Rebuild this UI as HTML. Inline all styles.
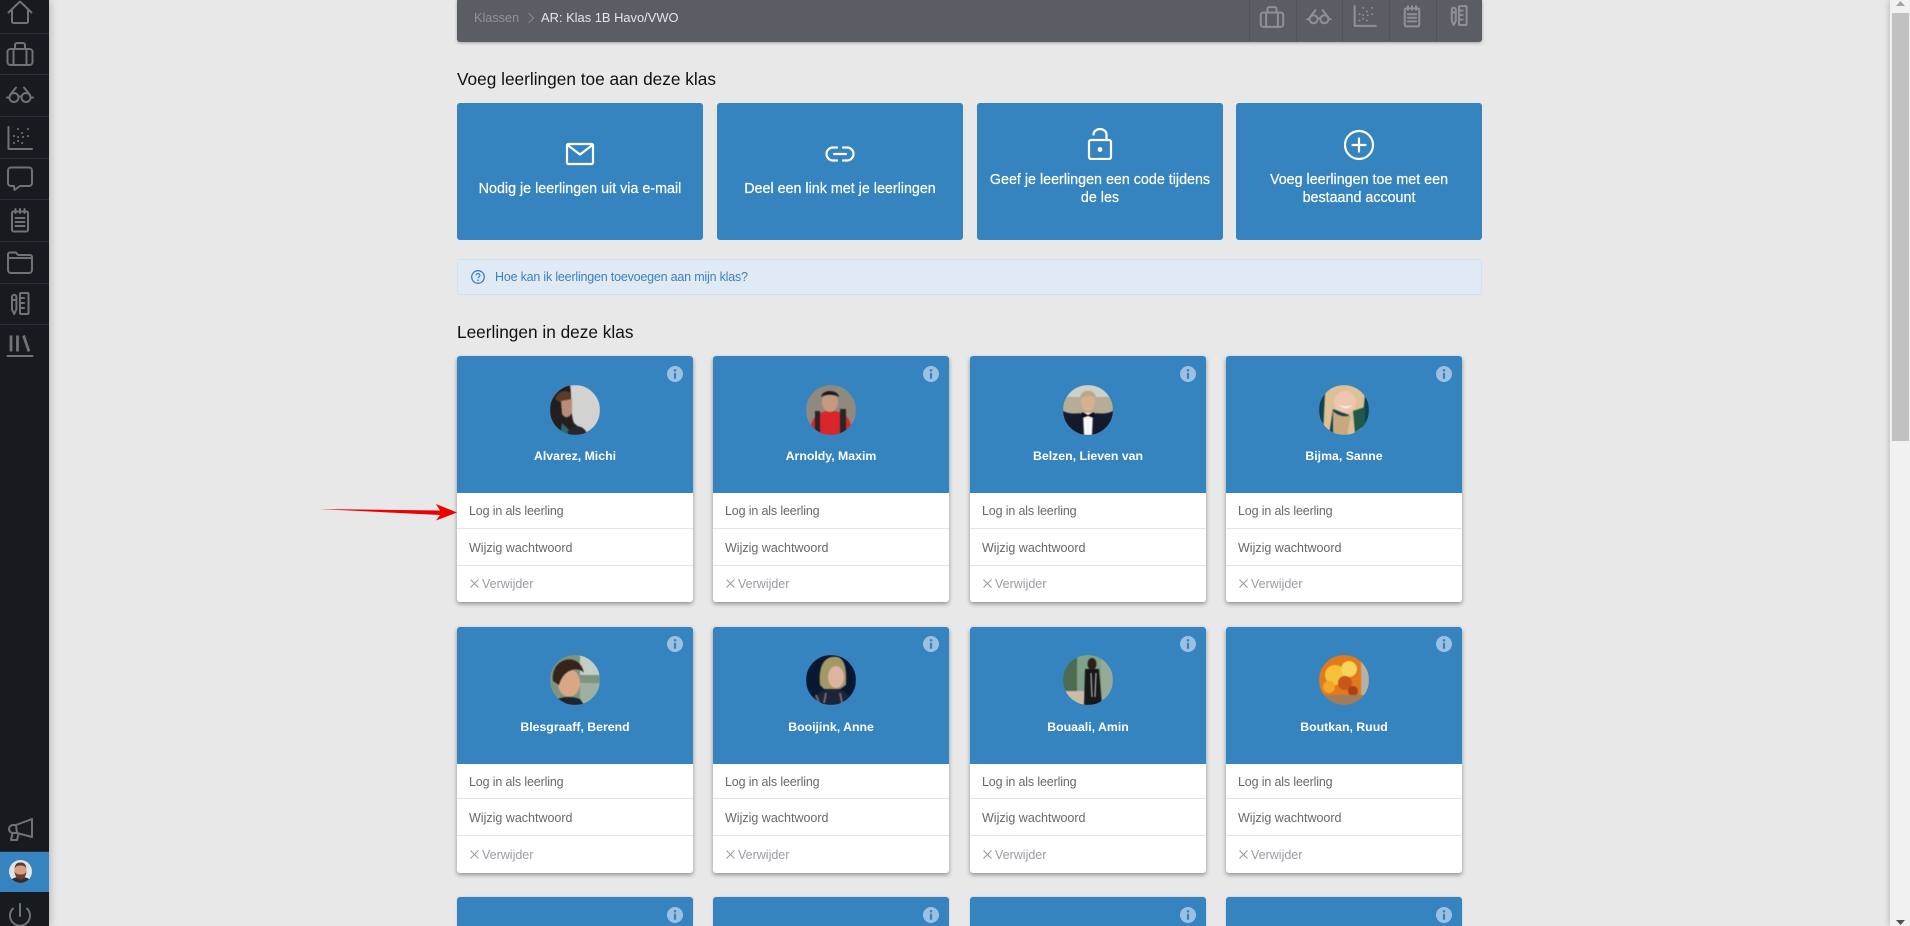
<!DOCTYPE html>
<html lang="nl">
<head>
<meta charset="utf-8">
<title>Klas</title>
<style>
html,body{margin:0;padding:0;width:1910px;height:926px;overflow:hidden}
#page{position:relative;width:1910px;height:926px;overflow:hidden;background:#e8e8e8;font-family:"Liberation Sans",sans-serif}
.a{position:absolute}
#side{left:0;top:0;width:49px;height:926px;background:#171a1f;box-shadow:0 0 9px rgba(0,0,0,.28)}
.sep{position:absolute;left:0;width:49px;height:1px;background:#2b2f37}
.ic{position:absolute;fill:none;stroke:#707276;stroke-width:2;stroke-linecap:round;stroke-linejoin:round}
.tic{position:absolute;fill:none;stroke:#8f9195;stroke-width:2.200;stroke-linecap:round;stroke-linejoin:round}
#bar{left:457px;top:0;width:1025px;height:42px;background:#5a5d64;border-radius:0 0 3px 3px;box-shadow:0 1px 3px rgba(0,0,0,.3)}
.bs{position:absolute;top:0;width:1px;height:42px;background:#50535a}
h2{position:absolute;margin:0;font-weight:400;font-size:17.250px;line-height:22px;color:#111;white-space:nowrap}
.b{position:absolute;top:103px;width:246px;height:137px;background:#3583bf;border-radius:3px;color:#fff}
.b div{position:absolute;left:10px;right:10px;text-align:center;font-size:14.300px;line-height:18px;-webkit-text-stroke:.2px #fff}
.b svg{position:absolute;fill:none;stroke:#fff;stroke-width:2.200;stroke-linecap:round;stroke-linejoin:round}
.c{position:absolute;width:236px;height:246px;background:#fff;border-radius:3px;box-shadow:0 2px 4px rgba(0,0,0,.38);overflow:hidden}
.t{height:29px;border-radius:3px 3px 0 0;box-shadow:0 0 2px rgba(0,0,0,.15)}
.h{position:absolute;left:0;top:0;width:236px;height:137px;background:#3583bf}
.i{position:absolute;left:210px;top:10px}
.v{position:absolute;left:93px;top:29px;width:50px;height:50px;border-radius:50%;overflow:hidden}
.v svg{display:block;filter:blur(.5px)}
.n{position:absolute;left:0;width:236px;top:90px;text-align:center;color:#fff;font-size:12.300px;font-weight:700;line-height:20px;white-space:nowrap}
.r{position:absolute;left:12px;font-size:12.500px;line-height:20px;color:#66686e;white-space:nowrap}
.g{letter-spacing:-.15px}
.l{position:absolute;left:0;width:236px;height:1px;background:#e4e4e6}
.d{color:#9a9ca3;left:25px}
.x{position:absolute;left:13px;stroke:#9a9ca3;stroke-width:1.100;fill:none}
.r2 .v{top:28px}
.r2 .i{top:9px}
</style>
</head>
<body>
<div id="page">
<svg width="0" height="0" style="position:absolute">
<symbol id="brief" viewBox="0 0 40 40"><rect x="7.500" y="15" width="25" height="16" rx="3"/><path d="M15 15V11a2 2 0 0 1 2-2h6a2 2 0 0 1 2 2v4M13.500 15v16M26.500 15v16"/></symbol>
<symbol id="glass" viewBox="0 0 40 40"><circle cx="14" cy="22.500" r="4.500"/><circle cx="26" cy="22.500" r="4.500"/><path d="M18.500 22c1-.8 2-.8 3 0M7 22.500h2.500M30.500 22.500H33M10 20l6-7.500M30 20l-6-7.500"/></symbol>
<symbol id="chart" viewBox="0 0 40 40"><path d="M8.500 9v22H32"/><path stroke-width="2" stroke-dasharray=".1 99" d="M18 11h.1M28 11h.1M22 15h.1M14 18h.1M18 19h.1M23 19h.1M28 18h.1M14 25h.1M22 25h.1M18 23h.1"/></symbol>
<symbol id="chat" viewBox="0 0 40 40"><path d="M11 8.500h18a3 3 0 0 1 3 3V24a3 3 0 0 1-3 3H20l-5.500 4-.5-4h-3a3 3 0 0 1-3-3V11.500a3 3 0 0 1 3-3z"/></symbol>
<symbol id="note" viewBox="0 0 40 40"><rect x="12" y="11.500" width="16" height="20" rx="1.500"/><path d="M15.500 9v4M20 9v4M24.500 9v4M15.500 18h9M15.500 22h9M15.500 26h9"/></symbol>
<symbol id="folder" viewBox="0 0 40 40"><path d="M8 15v-3.500a2 2 0 0 1 2-2h6l2 2.500h12a2 2 0 0 1 2 2V27a3 3 0 0 1-3 3H11a3 3 0 0 1-3-3V15h24"/></symbol>
<symbol id="tools" viewBox="0 0 40 40"><path d="M12 13a2.200 2.200 0 0 1 4.400 0v12.500L14.200 30 12 25.500zM12 16h4.400"/><rect x="20" y="9" width="8.500" height="21" rx="1"/><path d="M20 14h4M20 19h4M20 24h4" /></symbol>
<symbol id="lib" viewBox="0 0 40 40"><path stroke-width="2.800" stroke-linecap="butt" d="M11 9.500v16M17.500 9.500v16M23.500 9.500l5.500 16"/><path d="M7.500 30h25"/></symbol>
</svg>

<!-- Sidebar -->
<div id="side" class="a">
<svg class="ic" style="left:0;top:0" width="40" height="26" viewBox="0 0 40 26"><path d="M8.500 12.500L20 1.500l11.500 11M12 10.500V21.500a1.500 1.500 0 0 0 1.500 1.500h13a1.500 1.500 0 0 0 1.500-1.500V10.500"/></svg>
<div class="sep" style="top:33px"></div>
<svg class="ic" style="left:0;top:34px" width="40" height="40"><use href="#brief"/></svg>
<div class="sep" style="top:74px"></div>
<svg class="ic" style="left:0;top:75px" width="40" height="40"><use href="#glass"/></svg>
<div class="sep" style="top:116px"></div>
<svg class="ic" style="left:0;top:118px" width="40" height="40"><use href="#chart"/></svg>
<div class="sep" style="top:158px"></div>
<svg class="ic" style="left:0;top:159px" width="40" height="40"><use href="#chat"/></svg>
<div class="sep" style="top:199px"></div>
<svg class="ic" style="left:0;top:200px" width="40" height="40"><use href="#note"/></svg>
<div class="sep" style="top:241px"></div>
<svg class="ic" style="left:0;top:243px" width="40" height="40"><use href="#folder"/></svg>
<div class="sep" style="top:283px"></div>
<svg class="ic" style="left:0;top:284px" width="40" height="40"><use href="#tools"/></svg>
<div class="sep" style="top:324px"></div>
<svg class="ic" style="left:0;top:326px" width="40" height="40"><use href="#lib"/></svg>
<svg class="ic" style="left:0;top:815px" width="40" height="30" viewBox="0 0 40 30"><path d="M16 10L32 4v18l-15-4zM16 10h-3a4 4 0 0 0 0 8h4M12.500 18L11 25h6l1.500-6"/></svg>
<div class="a" style="left:0;top:851px;width:49px;height:1px;background:#2b2f37"></div>
<div class="a" style="left:0;top:852px;width:49px;height:40px;background:#3583bf"></div>
<div class="a" style="left:9px;top:860px;width:23px;height:23px;border-radius:50%;overflow:hidden">
<svg width="23" height="23" viewBox="0 0 23 23" style="display:block"><rect width="23" height="23" fill="#dfe3e6"/><path d="M1 23c1-5 5-6 10.500-6S21 18 22 23z" fill="#2f2e33"/><ellipse cx="11.500" cy="10.500" rx="6" ry="7.500" fill="#d59f85"/><path d="M5.500 9C6 3 9 2.500 11.500 2.500S17 3 17.500 9c-1-3-3-3.500-6-3.500S6.500 6 5.500 9z" fill="#5a3c2c"/><path d="M5.500 11c.5 6 3 8.500 6 8.500s5.500-2.500 6-8.500c-1 3-3 3.500-6 3.500s-5-.5-6-3.500z" fill="#6b3f2a"/></svg>
</div>
<svg class="ic" style="left:0;top:900px" width="40" height="26" viewBox="0 0 40 26"><path stroke-width="2" d="M20 4v12M13 8.500a10 10 0 1 0 14 0"/></svg>
</div>

<!-- Top bar -->
<div id="bar" class="a"></div>
<div class="a" style="left:474px;top:9px;font-size:12.700px;line-height:18px;color:#909297;white-space:nowrap">Klassen</div>
<svg class="a" style="left:527px;top:12px" width="8" height="12"><path d="M1.500 1l5 5-5 5" fill="none" stroke="#86888d" stroke-width="1.100"/></svg>
<div class="a" style="left:541px;top:9px;font-size:12.900px;line-height:18px;color:#e6e6e8;white-space:nowrap">AR: Klas 1B Havo/VWO</div>
<div class="bs" style="left:1249px"></div>
<div class="bs" style="left:1296px"></div>
<div class="bs" style="left:1342px"></div>
<div class="bs" style="left:1389px"></div>
<div class="bs" style="left:1436px"></div>
<svg class="tic" style="left:1254px;top:-1px" width="36" height="36"><use href="#brief"/></svg>
<svg class="tic" style="left:1301px;top:-1px" width="36" height="36"><use href="#glass"/></svg>
<svg class="tic" style="left:1347px;top:-2px" width="36" height="36"><use href="#chart"/></svg>
<svg class="tic" style="left:1394px;top:-2px" width="36" height="36"><use href="#note"/></svg>
<svg class="tic" style="left:1441px;top:-2px" width="36" height="36"><use href="#tools"/></svg>

<h2 style="left:457px;top:68px">Voeg leerlingen toe aan deze klas</h2>

<!-- Action buttons -->
<div class="b" style="left:457px">
<svg style="left:108px;top:39px" width="30" height="24"><rect x="2" y="2" width="26" height="20" rx="1.500"/><path d="M2.500 3l12.500 9.500L27.500 3"/></svg>
<div style="top:77px">Nodig je leerlingen uit via e-mail</div>
</div>
<div class="b" style="left:717px">
<svg style="left:108px;top:42px" width="30" height="18"><path d="M12 2.500H8a6.500 6.500 0 0 0 0 13h4M18 2.500h4a6.500 6.500 0 0 1 0 13h-4M9 9h12"/></svg>
<div style="top:77px">Deel een link met je leerlingen</div>
</div>
<div class="b" style="left:977px">
<svg style="left:110px;top:25px" width="26" height="32"><rect x="2" y="12" width="22" height="19" rx="2"/><path d="M6.500 6.500A6.500 5.500 0 0 1 19.500 6.500V12"/><circle cx="13" cy="21.500" r="1.900" fill="#fff" stroke="#fff" stroke-width="1"/></svg>
<div style="top:68px">Geef je leerlingen een code tijdens de les</div>
</div>
<div class="b" style="left:1236px">
<svg style="left:107px;top:26px" width="32" height="32"><circle cx="16" cy="16" r="14"/><path d="M16 9.500v13M9.500 16h13"/></svg>
<div style="top:68px">Voeg leerlingen toe met een bestaand account</div>
</div>

<!-- Info strip -->
<div class="a" style="left:457px;top:259px;width:1023px;height:34px;background:#e0eaf4;border:1px solid #d2e0ee;border-radius:3px"></div>
<svg class="a" style="left:470px;top:269px" width="16" height="16"><circle cx="8" cy="8" r="6.300" fill="none" stroke="#3a80bd" stroke-width="1.300"/><path d="M6.100 6.400a1.900 1.900 0 1 1 2.900 1.600c-.7.400-1 .7-1 1.300" fill="none" stroke="#3a80bd" stroke-width="1.200"/><circle cx="8" cy="11.200" r=".8" fill="#3a80bd"/></svg>
<div class="a" style="left:495px;top:268px;font-size:12.500px;letter-spacing:-.2px;line-height:18px;color:#3f7fbc;white-space:nowrap">Hoe kan ik leerlingen toevoegen aan mijn klas?</div>

<h2 style="left:457px;top:321px">Leerlingen in deze klas</h2>

<!-- Row 1 -->
<div class="c" style="left:457px;top:356px"><div class="h"></div>
<svg class="i" width="16" height="16"><circle cx="8" cy="8" r="8" fill="#9cc1e0"/><circle cx="8" cy="4.300" r="1.300" fill="#3583bf"/><rect x="6.900" y="6.800" width="2.200" height="6" fill="#3583bf"/></svg>
<div class="v"><svg width="50" height="50"><rect width="50" height="50" fill="#d2d2d0"/><path d="M0 0H20C22 12 20 28 24 38L38 50H0z" fill="#221f1e"/><path d="M5 14C8 6 16 4 20 8L21 18 10 17z" fill="#5c3c26"/><path d="M11 16L22 14 22 27C20 33 15 34 12 29z" fill="#b98e78"/><path d="M12 38l12 12H10z" fill="#2c6a70"/><path d="M18 46C24 38 34 40 38 50H18z" fill="#25272a"/></svg></div>
<div class="n">Alvarez, Michi</div>
<div class="r g" style="top:145px">Log in als leerling</div><div class="l" style="top:172px"></div>
<div class="r" style="top:182px">Wijzig wachtwoord</div><div class="l" style="top:209px"></div>
<svg class="x" style="top:223px" width="9" height="9"><path d="M.5.500l8 8M8.500.500l-8 8"/></svg><div class="r d" style="top:218px">Verwijder</div></div>

<div class="c" style="left:713px;top:356px"><div class="h"></div>
<svg class="i" width="16" height="16"><circle cx="8" cy="8" r="8" fill="#9cc1e0"/><circle cx="8" cy="4.300" r="1.300" fill="#3583bf"/><rect x="6.900" y="6.800" width="2.200" height="6" fill="#3583bf"/></svg>
<div class="v"><svg width="50" height="50"><rect width="50" height="50" fill="#8f8a80"/><path d="M4 50C4 32 12 26 25 26S46 32 46 50z" fill="#d8262b"/><rect x="9" y="26" width="5" height="22" fill="#2b2426"/><rect x="34" y="24" width="6" height="24" fill="#2b2426"/><ellipse cx="24" cy="17" rx="8" ry="10" fill="#c59a7e"/><path d="M15 12C16 4 32 4 33 12 28 9 20 9 15 12z" fill="#1c1c20"/></svg></div>
<div class="n">Arnoldy, Maxim</div>
<div class="r g" style="top:145px">Log in als leerling</div><div class="l" style="top:172px"></div>
<div class="r" style="top:182px">Wijzig wachtwoord</div><div class="l" style="top:209px"></div>
<svg class="x" style="top:223px" width="9" height="9"><path d="M.5.500l8 8M8.500.500l-8 8"/></svg><div class="r d" style="top:218px">Verwijder</div></div>

<div class="c" style="left:970px;top:356px"><div class="h"></div>
<svg class="i" width="16" height="16"><circle cx="8" cy="8" r="8" fill="#9cc1e0"/><circle cx="8" cy="4.300" r="1.300" fill="#3583bf"/><rect x="6.900" y="6.800" width="2.200" height="6" fill="#3583bf"/></svg>
<div class="v"><svg width="50" height="50"><rect width="50" height="50" fill="#b4ad98"/><rect width="50" height="12" fill="#cfd0c8"/><path d="M0 50V26C8 30 14 28 25 28S42 30 50 26V50z" fill="#141a2c"/><path d="M20 28h10l-1 22h-8z" fill="#f6f6f8"/><path d="M19 27l6 3 6-3v6l-6-2-6 2z" fill="#0c0c10"/><ellipse cx="25" cy="17" rx="7" ry="9" fill="#dcae90"/><path d="M17 14C17 3 33 3 33 14 30 10 22 10 17 14z" fill="#b8aa88"/></svg></div>
<div class="n">Belzen, Lieven van</div>
<div class="r g" style="top:145px">Log in als leerling</div><div class="l" style="top:172px"></div>
<div class="r" style="top:182px">Wijzig wachtwoord</div><div class="l" style="top:209px"></div>
<svg class="x" style="top:223px" width="9" height="9"><path d="M.5.500l8 8M8.500.500l-8 8"/></svg><div class="r d" style="top:218px">Verwijder</div></div>

<div class="c" style="left:1226px;top:356px"><div class="h"></div>
<svg class="i" width="16" height="16"><circle cx="8" cy="8" r="8" fill="#9cc1e0"/><circle cx="8" cy="4.300" r="1.300" fill="#3583bf"/><rect x="6.900" y="6.800" width="2.200" height="6" fill="#3583bf"/></svg>
<div class="v"><svg width="50" height="50"><rect width="50" height="50" fill="#12404e"/><path d="M6 8C14-4 36-4 46 10L42 50H28L30 30 14 24 10 50H4z" fill="#dcc096"/><ellipse cx="26" cy="17" rx="11" ry="11" fill="#eec6ae"/><path d="M20 20c4 4 10 4 13 0-3 2-9 2-13 0z" fill="#fff"/><path d="M14 26c6 6 14 6 18 4l-4 20H14z" fill="#c8a880"/><path d="M34 26l12-4v18l-10 8z" fill="#1f5a48"/></svg></div>
<div class="n">Bijma, Sanne</div>
<div class="r g" style="top:145px">Log in als leerling</div><div class="l" style="top:172px"></div>
<div class="r" style="top:182px">Wijzig wachtwoord</div><div class="l" style="top:209px"></div>
<svg class="x" style="top:223px" width="9" height="9"><path d="M.5.500l8 8M8.500.500l-8 8"/></svg><div class="r d" style="top:218px">Verwijder</div></div>

<!-- Row 2 -->
<div class="c r2" style="left:457px;top:627px"><div class="h"></div>
<svg class="i" width="16" height="16"><circle cx="8" cy="8" r="8" fill="#9cc1e0"/><circle cx="8" cy="4.300" r="1.300" fill="#3583bf"/><rect x="6.900" y="6.800" width="2.200" height="6" fill="#3583bf"/></svg>
<div class="v"><svg width="50" height="50"><rect width="50" height="50" fill="#7f9480"/><rect x="30" width="20" height="20" fill="#c2cfc4"/><rect x="30" y="28" width="20" height="22" fill="#9db0a2"/><ellipse cx="19" cy="28" rx="11" ry="14" fill="#d8a886"/><path d="M3 26C0 2 30-4 34 18 30 12 14 12 9 30z" fill="#33241c"/><path d="M4 46c6-4 16-6 26-2l4 6H4z" fill="#1c2430"/></svg></div>
<div class="n">Blesgraaff, Berend</div>
<div class="r g" style="top:145px">Log in als leerling</div><div class="l" style="top:171px"></div>
<div class="r" style="top:181px">Wijzig wachtwoord</div><div class="l" style="top:208px"></div>
<svg class="x" style="top:223px" width="9" height="9"><path d="M.5.500l8 8M8.500.500l-8 8"/></svg><div class="r d" style="top:218px">Verwijder</div></div>

<div class="c r2" style="left:713px;top:627px"><div class="h"></div>
<svg class="i" width="16" height="16"><circle cx="8" cy="8" r="8" fill="#9cc1e0"/><circle cx="8" cy="4.300" r="1.300" fill="#3583bf"/><rect x="6.900" y="6.800" width="2.200" height="6" fill="#3583bf"/></svg>
<div class="v"><svg width="50" height="50"><rect width="50" height="50" fill="#081830"/><path d="M14 30C12 8 20 0 32 2 42 6 40 24 40 30L34 34H18z" fill="#a49868"/><ellipse cx="30" cy="22" rx="8" ry="11" fill="#dcb4a0"/><path d="M4 50C8 38 18 34 28 34S44 40 46 50z" fill="#1c2438"/><path d="M10 40l4 10M20 38l-2 10M34 38l2 10" stroke="#706a78" stroke-width="2"/></svg></div>
<div class="n">Booijink, Anne</div>
<div class="r g" style="top:145px">Log in als leerling</div><div class="l" style="top:171px"></div>
<div class="r" style="top:181px">Wijzig wachtwoord</div><div class="l" style="top:208px"></div>
<svg class="x" style="top:223px" width="9" height="9"><path d="M.5.500l8 8M8.500.500l-8 8"/></svg><div class="r d" style="top:218px">Verwijder</div></div>

<div class="c r2" style="left:970px;top:627px"><div class="h"></div>
<svg class="i" width="16" height="16"><circle cx="8" cy="8" r="8" fill="#9cc1e0"/><circle cx="8" cy="4.300" r="1.300" fill="#3583bf"/><rect x="6.900" y="6.800" width="2.200" height="6" fill="#3583bf"/></svg>
<div class="v"><svg width="50" height="50"><rect width="50" height="50" fill="#7ea28c"/><rect width="14" height="50" fill="#4e6a50"/><rect y="36" width="50" height="14" fill="#c8bea8"/><rect x="38" width="12" height="50" fill="#96aa98"/><path d="M22 14h14l3 36H21z" fill="#17181a"/><path d="M28 18l1 24M33 18l-1 24" stroke="#c8c8c8" stroke-width="1"/><ellipse cx="29" cy="9" rx="4.500" ry="6" fill="#2c1e18"/></svg></div>
<div class="n">Bouaali, Amin</div>
<div class="r g" style="top:145px">Log in als leerling</div><div class="l" style="top:171px"></div>
<div class="r" style="top:181px">Wijzig wachtwoord</div><div class="l" style="top:208px"></div>
<svg class="x" style="top:223px" width="9" height="9"><path d="M.5.500l8 8M8.500.500l-8 8"/></svg><div class="r d" style="top:218px">Verwijder</div></div>

<div class="c r2" style="left:1226px;top:627px"><div class="h"></div>
<svg class="i" width="16" height="16"><circle cx="8" cy="8" r="8" fill="#9cc1e0"/><circle cx="8" cy="4.300" r="1.300" fill="#3583bf"/><rect x="6.900" y="6.800" width="2.200" height="6" fill="#3583bf"/></svg>
<div class="v"><svg width="50" height="50"><rect width="50" height="50" fill="#e07a1c"/><rect x="42" width="8" height="50" fill="#b8b0a0"/><circle cx="16" cy="20" r="10" fill="#f5c23c"/><circle cx="30" cy="14" r="8" fill="#f8d458"/><circle cx="10" cy="32" r="6" fill="#f3a52c"/><circle cx="26" cy="28" r="7" fill="#c8561a"/><circle cx="34" cy="36" r="5" fill="#a8401a"/><rect y="40" width="50" height="10" fill="#a27c58"/></svg></div>
<div class="n">Boutkan, Ruud</div>
<div class="r g" style="top:145px">Log in als leerling</div><div class="l" style="top:171px"></div>
<div class="r" style="top:181px">Wijzig wachtwoord</div><div class="l" style="top:208px"></div>
<svg class="x" style="top:223px" width="9" height="9"><path d="M.5.500l8 8M8.500.500l-8 8"/></svg><div class="r d" style="top:218px">Verwijder</div></div>

<!-- Row 3 -->
<div class="c t" style="left:457px;top:897px"><div class="h"></div><svg class="i" width="16" height="16"><circle cx="8" cy="8" r="8" fill="#9cc1e0"/><circle cx="8" cy="4.300" r="1.300" fill="#3583bf"/><rect x="6.900" y="6.800" width="2.200" height="6" fill="#3583bf"/></svg></div>
<div class="c t" style="left:713px;top:897px"><div class="h"></div><svg class="i" width="16" height="16"><circle cx="8" cy="8" r="8" fill="#9cc1e0"/><circle cx="8" cy="4.300" r="1.300" fill="#3583bf"/><rect x="6.900" y="6.800" width="2.200" height="6" fill="#3583bf"/></svg></div>
<div class="c t" style="left:970px;top:897px"><div class="h"></div><svg class="i" width="16" height="16"><circle cx="8" cy="8" r="8" fill="#9cc1e0"/><circle cx="8" cy="4.300" r="1.300" fill="#3583bf"/><rect x="6.900" y="6.800" width="2.200" height="6" fill="#3583bf"/></svg></div>
<div class="c t" style="left:1226px;top:897px"><div class="h"></div><svg class="i" width="16" height="16"><circle cx="8" cy="8" r="8" fill="#9cc1e0"/><circle cx="8" cy="4.300" r="1.300" fill="#3583bf"/><rect x="6.900" y="6.800" width="2.200" height="6" fill="#3583bf"/></svg></div>

<!-- Red arrow -->
<svg class="a" style="left:316px;top:500px" width="144" height="24"><path d="M3 9L124 10.500 120 4 141 12.500 120 20.500 124 15z" fill="#ee0000"/></svg>

<!-- Scrollbar -->
<div class="a" style="left:1890px;top:0;width:20px;height:926px;background:#f1f1f1;box-shadow:0 0 7px rgba(0,0,0,.25)"></div>
<div class="a" style="left:1892px;top:13px;width:17px;height:428px;background:#c1c1c1"></div>
<svg class="a" style="left:1895px;top:1px" width="11" height="6"><path d="M5.500 0L10 5H1z" fill="#a3a3a3"/></svg>
<svg class="a" style="left:1895px;top:920px" width="11" height="6"><path d="M1 0h9L5.500 5z" fill="#505050"/></svg>
</div>
</body>
</html>
